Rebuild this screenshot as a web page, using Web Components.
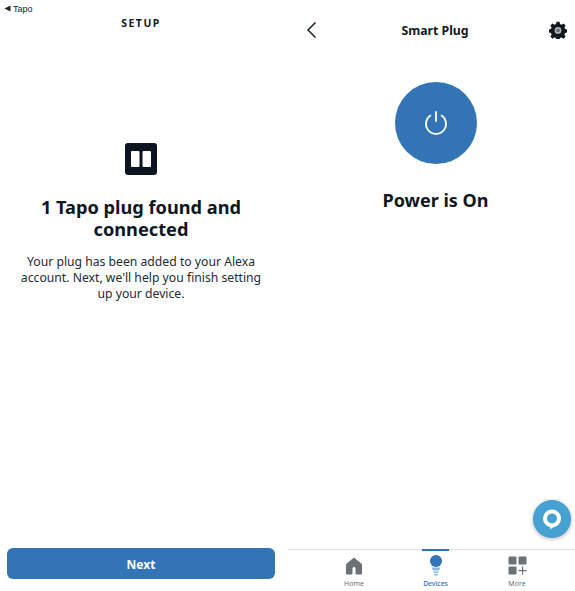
<!DOCTYPE html>
<html>
<head>
<meta charset="utf-8">
<title>Smart Plug setup</title>
<style>
  html, body { margin: 0; height: 100%; background: #fff; }
  body { font-family: "Noto Sans", "Open Sans", sans-serif; color: #0f1720; overflow: hidden; }
  #app { display: grid; grid-template-columns: 288px 287px; height: 591px; }
</style>
</head>
<body>
<div id="app">
  <setup-screen heading="SETUP" back="Tapo">
    <span slot="title">1 Tapo plug found and connected</span>
    Your plug has been added to your Alexa account. Next, we'll help you finish setting up your device.
  </setup-screen>
  <device-screen name="Smart Plug" status="Power is On"></device-screen>
</div>

<script>
// left phone: found the plug
class SetupScreen extends HTMLElement {
  constructor() {
    super();
    this.attachShadow({ mode: 'open' });
  }

  connectedCallback() {
    this.shadowRoot.innerHTML = `
      <style>
        :host { display: flex; flex-direction: column; height: 591px; }
        .status { height: 16px; padding: 1px 0 0 4px; box-sizing: border-box; font: 9px/12px "Liberation Sans", sans-serif; color: #222; display: flex; align-items: center; gap: 2px; }
        .status svg { display: block; }
        .heading { margin: 1px 6px 0 0; text-align: center; font-size: 10.500px; line-height: 12px; font-weight: 700; letter-spacing: 1.500px; }
        .main { flex: 1; display: flex; flex-direction: column; align-items: center; padding: 114px 6px 0 0; }
        .plug { display: block; }
        h1 { margin: 21px 0 0; width: 250px; font-size: 18.200px; line-height: 22px; font-weight: 700; text-align: center; }
        p { margin: 14px 0 0; width: 250px; font-size: 12.200px; line-height: 16px; text-align: center; color: #222b33; }
        button { display: block; margin: 0 13px 12px 7px; height: 31px; padding: 1px 0 0; border: 0; border-radius: 6px; background: #3274b5; color: #fff; font: 700 12px "Noto Sans", sans-serif; }
      </style>
      <div class="status">
        <svg width="7" height="7" viewBox="0 0 7 7"><path d="M0.5 3.5 6.5 0.5v6z" fill="#222"/></svg>
        <span>${this.getAttribute('back')}</span>
      </div>
      <div class="heading">${this.getAttribute('heading')}</div>
      <div class="main">
        <svg class="plug" width="32" height="32" viewBox="0 0 32 32">
          <rect width="32" height="32" rx="3" fill="#0b1520"/>
          <rect x="6" y="8" width="8.500" height="16" rx="1" fill="#fff"/>
          <rect x="17.500" y="8" width="8.500" height="16" rx="1" fill="#fff"/>
        </svg>
        <h1><slot name="title"></slot></h1>
        <p><slot></slot></p>
      </div>
      <button>Next</button>
    `;
  }
}

// one tab of the bottom bar, icon goes in the slot
class NavItem extends HTMLElement {
  constructor() {
    super();
    this.attachShadow({ mode: 'open' });
  }

  connectedCallback() {
    this.shadowRoot.innerHTML = `
      <style>
        :host { display: flex; flex-direction: column; align-items: center; font-size: 7px; line-height: 10px; color: #6b7176; padding-top: 5px; position: relative; }
        :host([active]) { color: #3274b5; font-weight: 500; font-size: 6.800px; }
        :host([active])::before { content: ""; position: absolute; top: -1px; left: 27px; width: 27px; height: 2px; background: #3274b5; }
        .icon { height: 21px; display: flex; align-items: center; }
        .label { margin-top: 3px; }
      </style>
      <div class="icon"><slot></slot></div>
      <div class="label">${this.getAttribute('label')}</div>
    `;
  }
}

// right phone: plug control
class DeviceScreen extends HTMLElement {
  constructor() {
    super();
    this.attachShadow({ mode: 'open' });
  }

  connectedCallback() {
    this.shadowRoot.innerHTML = `
      <style>
        :host { display: flex; flex-direction: column; height: 591px; position: relative; }
        .top { padding-left: 8px; flex: 1; display: flex; flex-direction: column; }
        header { height: 60px; padding: 0 8px 0 9px; box-sizing: border-box; display: flex; align-items: center; justify-content: space-between; }
        header svg { display: block; }
        .title { font-size: 12.300px; font-weight: 700; color: #111a22; }
        .power { width: 82px; height: 82px; margin: 22px auto 0; border-radius: 50%; background: #3274b5; display: flex; align-items: center; justify-content: center; }
        .status { margin-top: 24px; text-align: center; font-size: 18px; line-height: 24px; font-weight: 700; }
        .fab { position: absolute; left: 245px; top: 500px; width: 38px; height: 38px; border-radius: 50%; background: #46a0d1; box-shadow: 0 1px 4px rgba(0,0,0,.3); display: flex; align-items: center; justify-content: center; }
        nav { height: 41px; margin-left: 0; padding: 0 0 0 8px; border-top: 1px solid #dcdfe1; display: grid; grid-template-columns: 81.500px 81.500px 81.500px; justify-content: center; }
      </style>
      <div class="top">
        <header>
          <svg width="16" height="18" viewBox="0 0 16 18"><path d="M10.500 1.500 3 9l7.500 7.500" fill="none" stroke="#16202a" stroke-width="1.500"/></svg>
          <span class="title">${this.getAttribute('name')}</span>
          <svg width="18" height="18" viewBox="0 0 24 24">
            <path fill="#0f1720" fill-rule="evenodd" d="M10 1h4l.6 3 2.200.9 2.600-1.700 2.800 2.800-1.700 2.600.9 2.200 3 .6v4l-3 .6-.9 2.200 1.700 2.600-2.800 2.800-2.600-1.700-2.200.9-.6 3h-4l-.6-3-2.200-.9-2.600 1.700-2.800-2.800 1.700-2.600-.9-2.200-3-.6v-4l3-.6.9-2.200L1.800 6l2.800-2.800 2.600 1.700L9.400 4z"/>
            <circle cx="12" cy="12.500" r="4.500" fill="#b5b8ba"/>
            <circle cx="12" cy="12.500" r="2.500" fill="#6a6f74"/>
          </svg>
        </header>
        <div class="power">
          <svg width="26" height="26" viewBox="0 0 26 26" fill="none" stroke="#fff" stroke-width="1.800" stroke-linecap="round">
            <path d="M13 2v9"/>
            <path d="M7.500 5.600a10 10 0 1 0 11 0"/>
          </svg>
        </div>
        <div class="status">${this.getAttribute('status')}</div>
      </div>
      <div class="fab">
        <svg width="24" height="24" viewBox="0 0 24 24">
          <path fill="#fff" fill-rule="evenodd" d="M12 2.500a9 9 0 0 1 1 17.950L10.200 22.300v-1.980A9 9 0 0 1 12 2.500zm0 4a5 5 0 1 0 0 10 5 5 0 0 0 0-10z"/>
        </svg>
      </div>
      <nav>
        <nav-item label="Home">
          <svg width="18" height="18" viewBox="0 0 18 18"><path fill="#6b7176" stroke="#6b7176" stroke-width="1" stroke-linejoin="round" d="M9 1 16.500 7.200V17h-5.500v-5.500a2 2 0 0 0-4 0V17H1.500V7.200z"/></svg>
        </nav-item>
        <nav-item label="Devices" active>
          <svg width="14" height="21" viewBox="0 0 14 21">
            <circle cx="7" cy="6" r="6" fill="#3274b5"/>
            <path d="M2.500 12.500h9L10 15.500H4z" fill="#8db9de"/>
            <rect x="4.500" y="16.500" width="5" height="1.500" fill="#8db9de"/>
            <rect x="5" y="19" width="4" height="1.500" fill="#8db9de"/>
          </svg>
        </nav-item>
        <nav-item label="More">
          <svg width="19" height="19" viewBox="0 0 19 19" fill="#6b7176">
            <rect x=".5" y=".5" width="8" height="8" rx="1"/>
            <rect x="10.500" y=".5" width="8" height="8" rx="1"/>
            <rect x=".5" y="10.500" width="8" height="8" rx="1"/>
            <path d="M14 10.500h1.200V14h3.300v1.200h-3.300v3.300H14v-3.300h-3.500V14H14z"/>
          </svg>
        </nav-item>
      </nav>
    `;
  }
}

customElements.define('setup-screen', SetupScreen);
customElements.define('nav-item', NavItem);
customElements.define('device-screen', DeviceScreen);
</script>
</body>
</html>
